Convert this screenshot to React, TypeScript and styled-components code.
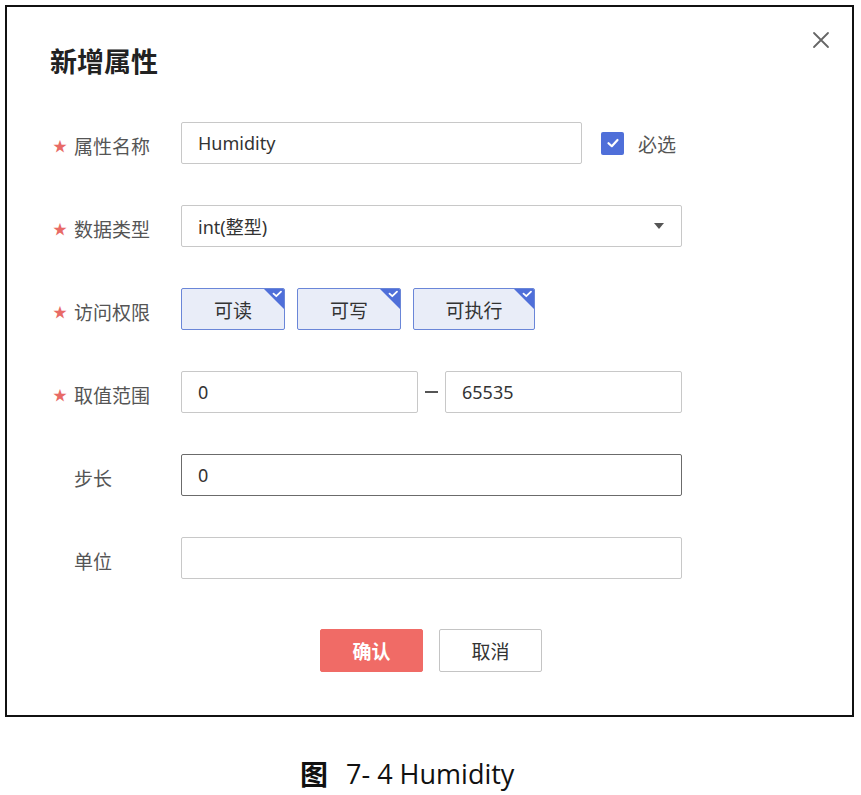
import React from 'react';
import styled, { createGlobalStyle } from 'styled-components';

const GlobalStyle = createGlobalStyle`
  html, body {
    margin: 0;
    padding: 0;
    background: #ffffff;
  }
  body {
    font-family: "Noto Sans", "Noto Sans CJK SC", sans-serif;
    color: #333333;
  }
`;

const Page = styled.div`
  width: 861px;
  height: 795px;
  padding: 5px 0 0 5px;
  box-sizing: border-box;
`;

const Frame = styled.div`
  position: relative;
  width: 849px;
  height: 712px;
  box-sizing: border-box;
  border: 2px solid #111111;
  padding: 36px 0 0 46px;
`;

const Title = styled.h1`
  margin: 0 0 0 -3px;
  font-family: "Noto Sans CJK SC", sans-serif;
  font-size: 27px;
  line-height: 36px;
  font-weight: 700;
  color: #222222;
`;

const CloseButton = styled.button`
  position: absolute;
  top: 23px;
  right: 21px;
  width: 20px;
  height: 20px;
  padding: 0;
  border: 0;
  background: none;
  display: flex;
  align-items: center;
  justify-content: center;
`;

const Form = styled.div`
  display: flex;
  flex-direction: column;
  gap: 41px;
  margin-top: 43px;
`;

const Row = styled.div`
  display: grid;
  grid-template-columns: 128px auto;
  align-items: center;
  height: 42px;
`;

const Label = styled.div<{ $required?: boolean }>`
  display: flex;
  align-items: center;
  padding-left: ${(p) => (p.$required ? '0' : '21px')};
  font-family: "Noto Sans CJK SC", sans-serif;
  font-size: 19px;
  color: #555555;
  margin-top: 4px;
`;

const Star = styled.span`
  color: #e86a66;
  font-size: 14px;
  width: 21px;
`;

const Field = styled.div`
  display: flex;
  align-items: center;
`;

const Input = styled.div<{ $width: number; $focused?: boolean }>`
  width: ${(p) => p.$width}px;
  height: 42px;
  box-sizing: border-box;
  border: 1px solid ${(p) => (p.$focused ? '#6b6b6b' : '#c8c8c8')};
  border-radius: 2px;
  padding: 0 16px;
  display: flex;
  align-items: center;
  justify-content: space-between;
  font-family: "Noto Sans", "Noto Sans CJK SC", sans-serif;
  font-size: 18px;
  color: #333333;
  background: #ffffff;
`;

const Caret = styled.span`
  width: 0;
  height: 0;
  border-left: 5px solid transparent;
  border-right: 5px solid transparent;
  border-top: 6px solid #555555;
  margin-right: 1px;
`;

const CheckBox = styled.span`
  width: 23px;
  height: 23px;
  margin-left: 19px;
  border-radius: 2px;
  background: #4f6fd9;
  display: flex;
  align-items: center;
  justify-content: center;
`;

const CheckText = styled.span`
  margin-left: 14px;
  font-family: "Noto Sans CJK SC", sans-serif;
  font-size: 19px;
  color: #555555;
`;

const TagGroup = styled.div`
  display: flex;
  gap: 12px;
`;

const Tag = styled.div<{ $width: number }>`
  position: relative;
  width: ${(p) => p.$width}px;
  height: 42px;
  box-sizing: border-box;
  border: 1px solid #6a86d8;
  border-radius: 2px;
  background: #e9edf8;
  display: flex;
  align-items: center;
  justify-content: center;
  font-family: "Noto Sans CJK SC", sans-serif;
  font-size: 19px;
  color: #333333;
  overflow: hidden;
`;

const TagCorner = styled.svg`
  position: absolute;
  top: 0;
  right: 0;
`;

const Dash = styled.span`
  width: 13px;
  height: 2px;
  background: #555555;
  margin: 0 7px;
`;

const Actions = styled.div`
  display: flex;
  gap: 16px;
  margin: 50px 0 0 267px;
`;

const Button = styled.button<{ $primary?: boolean }>`
  width: 103px;
  height: 43px;
  box-sizing: border-box;
  border-radius: 2px;
  border: 1px solid ${(p) => (p.$primary ? '#f06b66' : '#c4c4c4')};
  background: ${(p) => (p.$primary ? '#f06b66' : '#ffffff')};
  color: ${(p) => (p.$primary ? '#ffffff' : '#333333')};
  font-family: "Noto Sans CJK SC", sans-serif;
  font-size: 19px;
  font-weight: ${(p) => (p.$primary ? 700 : 400)};
  padding: 0;
`;

const Caption = styled.div`
  display: flex;
  align-items: center;
  margin: 36px 0 0 295px;
  font-family: "Open Sans", sans-serif;
  font-size: 27px;
  color: #111111;
`;

const CaptionMark = styled.span`
  font-family: "Noto Sans CJK SC", sans-serif;
  font-weight: 700;
  font-size: 28px;
  margin-right: 18px;
`;

const Check = ({ size = 14 }: { size?: number }) => (
  <svg width={size} height={size} viewBox="0 0 14 14">
    <path d="M2.5 7.2 L5.8 10.2 L11.5 4" fill="none" stroke="#ffffff" strokeWidth="2.2" strokeLinecap="round" strokeLinejoin="round" />
  </svg>
);

const Corner = () => (
  <TagCorner width="20" height="20" viewBox="0 0 20 20">
    <path d="M0 0 H20 V20 Z" fill="#4f6fd9" />
    <path d="M9.5 4.6 L12.3 7.2 L17 2.6" fill="none" stroke="#ffffff" strokeWidth="1.8" strokeLinecap="round" strokeLinejoin="round" />
  </TagCorner>
);

const FormLabel = ({ text, required }: { text: string; required?: boolean }) => (
  <Label $required={required}>
    {required && <Star>★</Star>}
    {text}
  </Label>
);

export default function App() {
  return (
    <>
      <GlobalStyle />
      <Page>
        <Frame>
          <Title>新增属性</Title>
          <CloseButton aria-label="关闭">
            <svg width="18" height="18" viewBox="0 0 18 18">
              <path d="M2 2 L16 16 M16 2 L2 16" stroke="#666666" strokeWidth="1.8" strokeLinecap="round" />
            </svg>
          </CloseButton>
          <Form>
            <Row>
              <FormLabel text="属性名称" required />
              <Field>
                <Input $width={401}>Humidity</Input>
                <CheckBox>
                  <Check />
                </CheckBox>
                <CheckText>必选</CheckText>
              </Field>
            </Row>
            <Row>
              <FormLabel text="数据类型" required />
              <Field>
                <Input $width={501}>
                  int(整型)
                  <Caret />
                </Input>
              </Field>
            </Row>
            <Row>
              <FormLabel text="访问权限" required />
              <TagGroup>
                <Tag $width={104}>
                  可读
                  <Corner />
                </Tag>
                <Tag $width={104}>
                  可写
                  <Corner />
                </Tag>
                <Tag $width={122}>
                  可执行
                  <Corner />
                </Tag>
              </TagGroup>
            </Row>
            <Row>
              <FormLabel text="取值范围" required />
              <Field>
                <Input $width={237}>0</Input>
                <Dash />
                <Input $width={237}>65535</Input>
              </Field>
            </Row>
            <Row>
              <FormLabel text="步长" />
              <Field>
                <Input $width={501} $focused>0</Input>
              </Field>
            </Row>
            <Row>
              <FormLabel text="单位" />
              <Field>
                <Input $width={501} />
              </Field>
            </Row>
          </Form>
          <Actions>
            <Button $primary>确认</Button>
            <Button>取消</Button>
          </Actions>
        </Frame>
        <Caption>
          <CaptionMark>图</CaptionMark>
          7- 4 Humidity
        </Caption>
      </Page>
    </>
  );
}
